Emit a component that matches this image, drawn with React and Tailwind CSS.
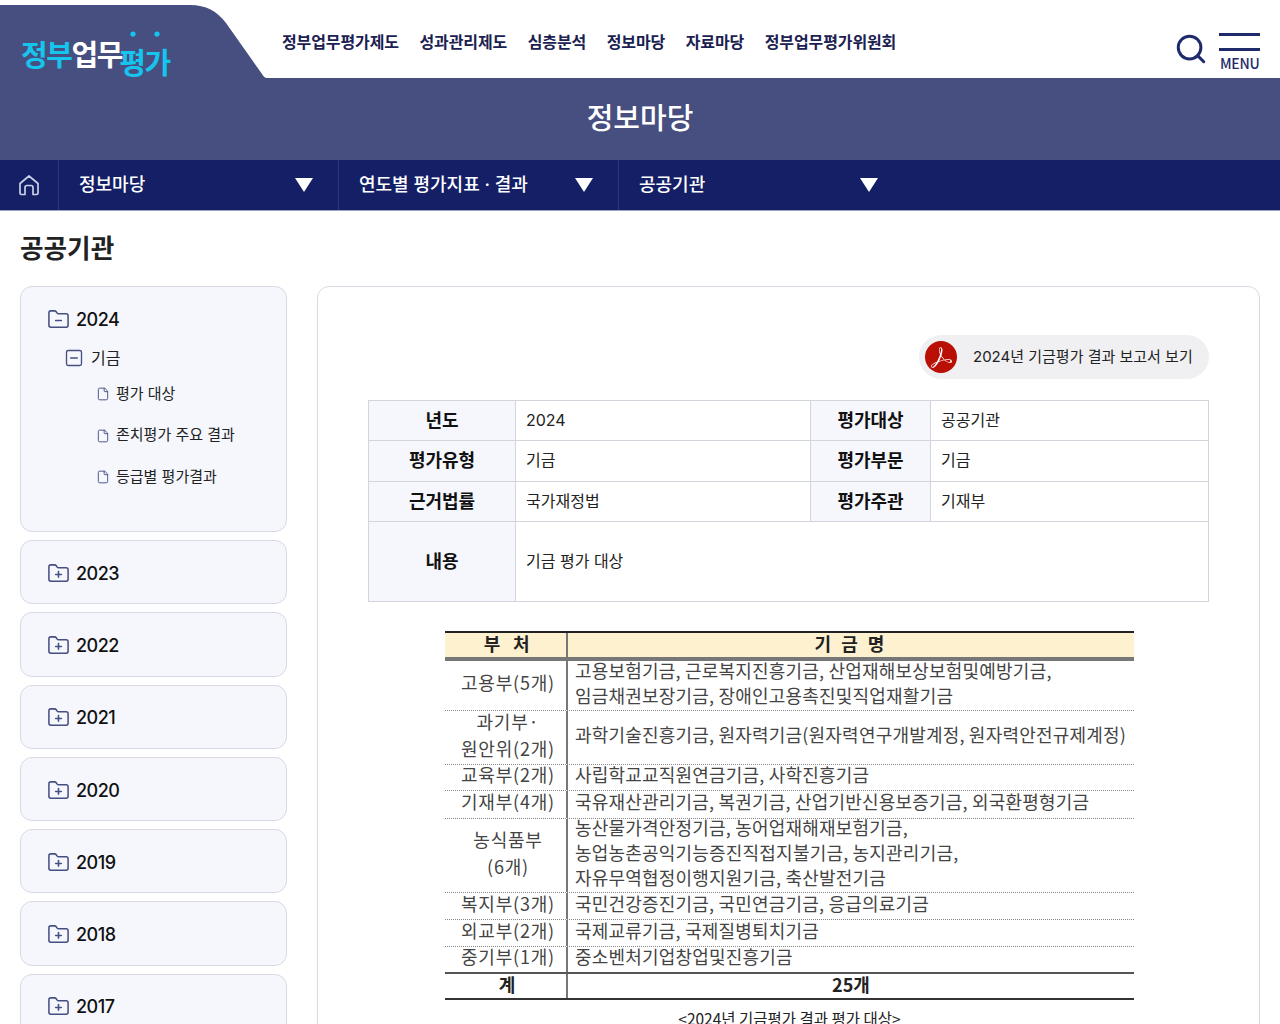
import React from 'react';
import { FolderMinus, FolderPlus, File, SquareMinus, Search } from 'lucide-react';
import { SiAdobeacrobatreader } from 'react-icons/si';

const fontUi = 'font-["Inter","Noto_Sans_CJK_KR",sans-serif]';

const topMenu = ['정부업무평가제도', '성과관리제도', '심층분석', '정보마당', '자료마당', '정부업무평가위원회'];
const crumbs = ['정보마당', '연도별 평가지표 · 결과', '공공기관'];
const years = ['2023', '2022', '2021', '2020', '2019', '2018', '2017'];
const subItems = ['평가 대상', '존치평가 주요 결과', '등급별 평가결과'];

const funds = [
  { dept: ['고용부(5개)'], h: 'h-[50px]', lines: ['고용보험기금, 근로복지진흥기금, 산업재해보상보험및예방기금,', '임금채권보장기금, 장애인고용촉진및직업재활기금'] },
  { dept: ['과기부·', '원안위(2개)'], h: 'h-[54px]', lines: ['과학기술진흥기금, 원자력기금(원자력연구개발계정, 원자력안전규제계정)'] },
  { dept: ['교육부(2개)'], h: 'h-[26px]', lines: ['사립학교교직원연금기금, 사학진흥기금'] },
  { dept: ['기재부(4개)'], h: 'h-[28px]', lines: ['국유재산관리기금, 복권기금, 산업기반신용보증기금, 외국환평형기금'] },
  { dept: ['농식품부', '(6개)'], h: 'h-[74px]', lines: ['농산물가격안정기금, 농어업재해재보험기금,', '농업농촌공익기능증진직접지불기금, 농지관리기금,', '자유무역협정이행지원기금, 축산발전기금'] },
  { dept: ['복지부(3개)'], h: 'h-[27px]', lines: ['국민건강증진기금, 국민연금기금, 응급의료기금'] },
  { dept: ['외교부(2개)'], h: 'h-[27px]', lines: ['국제교류기금, 국제질병퇴치기금'] },
  { dept: ['중기부(1개)'], h: 'h-[25px]', lines: ['중소벤처기업창업및진흥기금'] },
];

const Logo = () => (
  <div className="relative w-[267px] h-[78px] shrink-0">
    <svg className="absolute inset-0" width="267" height="78" viewBox="0 0 267 78">
      <path d="M0 5 H190 C206 5 217 11 226 23 L262 74 C263.500 76.500 265 78 267 78 H0 Z" fill="#474f80" />
      <circle cx="133" cy="34" r="2.6" fill="#16c5ee" />
      <circle cx="157" cy="34" r="2.6" fill="#16c5ee" />
    </svg>
    <div className="absolute left-[21px] top-[33px] flex items-start text-[29px] leading-[40px] font-bold tracking-[-1.4px] font-['Noto_Sans_CJK_KR',sans-serif]">
      <span className="text-[#16c5ee]">정부</span>
      <span className="text-white">업무</span>
      <span className="text-[#16c5ee] mt-[8px] -ml-[3px]">평가</span>
    </div>
  </div>
);

const Header = () => (
  <header className="flex h-[78px] bg-white">
    <Logo />
    <nav className="flex gap-[20.500px] ml-[15px] pt-[31px] text-[16px] leading-[22px] font-bold text-[#1b2150] tracking-[-0.1px]">
      {topMenu.map((m) => (
        <span key={m}>{m}</span>
      ))}
    </nav>
    <div className="ml-auto flex items-start pt-[33px] pr-[20px] gap-[11px]">
      <Search size={34} strokeWidth={2.1} className="text-[#1f2a6b] -mt-[1px]" />
      <div className="w-[41px]">
        <div className="h-[3px] bg-[#1f2a6b]" />
        <div className="h-[3px] bg-[#1f2a6b] mt-[12px]" />
        <div className="text-[14px] leading-[16px] mt-[4px] font-medium text-[#1f2a6b] font-['Noto_Sans_CJK_KR',sans-serif] pl-[1px] tracking-[-0.3px]">MENU</div>
      </div>
    </div>
  </header>
);

const Breadcrumb = () => (
  <div className="flex h-[51px] bg-[#141f66] border-b border-[#9aa3c4]">
    <div className="w-[59px] flex items-center justify-center border-r border-[#2b3679]">
      <svg width="22" height="22" viewBox="0 0 22 22" fill="none" stroke="#c9d0e8" strokeWidth="1.7" strokeLinejoin="round">
        <path d="M2 9.5 L11 2 L20 9.5 V19 a1.5 1.5 0 0 1 -1.5 1.5 H15 V13.5 a2 2 0 0 0 -2 -2 H9 a2 2 0 0 0 -2 2 V20.500 H3.500 A1.500 1.500 0 0 1 2 19 Z" />
      </svg>
    </div>
    {crumbs.map((c) => (
      <div key={c} className="w-[280px] last:w-[284px] flex items-center justify-between pl-[20px] pr-[25px] pb-[2px] border-r border-[#2b3679] text-[18px] font-medium text-white last:border-r-0">
        <span>{c}</span>
        <svg width="18" height="14" viewBox="0 0 18 14" className="mt-[1px]">
          <polygon points="0,0 18,0 9,14" fill="#ffffff" />
        </svg>
      </div>
    ))}
  </div>
);

const Sidebar = () => (
  <aside className="w-[267px] shrink-0 flex flex-col gap-[8px]">
    <div className="h-[246px] rounded-xl border border-[#d8dae3] bg-[#f5f7fd] pl-[26px] pt-[19px]">
      <div className="flex items-center gap-[6px] h-[26px] text-[18px] tracking-[-0.5px] font-medium text-[#111]">
        <FolderMinus size={23} strokeWidth={1.6} className="text-[#474f80]" />
        <span>2024</span>
      </div>
      <div className="flex items-center gap-[7px] h-[24px] mt-[14px] ml-[17px] text-[16px] text-[#222]">
        <SquareMinus size={20} strokeWidth={1.6} className="text-[#474f80]" />
        <span>기금</span>
      </div>
      <div className="flex flex-col gap-[19.500px] mt-[13px] ml-[49px]">
        {subItems.map((s) => (
          <div key={s} className="flex items-center gap-[6px] h-[22px] text-[15px] text-[#222]">
            <File size={14} strokeWidth={1.6} className="text-[#474f80]" />
            <span>{s}</span>
          </div>
        ))}
      </div>
    </div>
    {years.map((y) => (
      <div key={y} className="h-[64.300px] shrink-0 rounded-xl border border-[#d8dae3] bg-[#f5f7fd] pl-[26px] pt-[2px] flex items-center gap-[6px] text-[18px] tracking-[-0.5px] font-medium text-[#111]">
        <FolderPlus size={23} strokeWidth={1.6} className="text-[#474f80]" />
        <span>{y}</span>
      </div>
    ))}
  </aside>
);

const InfoTable = () => {
  const th = 'bg-[#f5f7fd] border border-[#d3d5dd] text-[18px] font-bold text-[#111] text-center pb-[1px]';
  const td = 'border border-[#d3d5dd] px-[10px] pb-[2px] text-[16px] text-[#222]';
  return (
    <table className="w-[841px] table-fixed border-collapse">
      <colgroup>
        <col className="w-[147px]" />
        <col className="w-[295px]" />
        <col className="w-[120px]" />
        <col />
      </colgroup>
      <tbody>
        <tr className="h-[40px]">
          <th className={th}>년도</th>
          <td className={td}>2024</td>
          <th className={th}>평가대상</th>
          <td className={td}>공공기관</td>
        </tr>
        <tr className="h-[41px]">
          <th className={th}>평가유형</th>
          <td className={td}>기금</td>
          <th className={th}>평가부문</th>
          <td className={td}>기금</td>
        </tr>
        <tr className="h-[40px]">
          <th className={th}>근거법률</th>
          <td className={td}>국가재정법</td>
          <th className={th}>평가주관</th>
          <td className={td}>기재부</td>
        </tr>
        <tr className="h-[80px]">
          <th className={th}>내용</th>
          <td className={td} colSpan={3}>기금 평가 대상</td>
        </tr>
      </tbody>
    </table>
  );
};

const FundTable = () => (
  <div className="w-[689px] ml-[77px] mt-[29px] font-['Noto_Sans_CJK_KR',sans-serif] text-[18px] leading-[25px] text-[#444]">
    <div className="flex h-[30px] border-t-[2px] border-b-[4px] border-t-[#222] border-b-[#777] bg-[#fdf1d0] font-bold text-[#222] leading-[20px]">
      <div className="w-[123px] text-center border-r-[2px] border-[#777] tracking-[1.5px] pl-[4px]">부&nbsp;&nbsp;처</div>
      <div className="flex-1 text-center tracking-[3px]">기&nbsp;금&nbsp;명</div>
    </div>
    {funds.map((f, i) => (
      <div key={f.dept[0]} className={`flex ${f.h} ${i < funds.length - 1 ? 'border-b border-dotted border-[#888]' : ''}`}>
        <div className="w-[123px] flex flex-col justify-center items-center border-r-[2px] border-[#777] pb-[6px] pl-[5px] tracking-[0.8px]">
          {f.dept.map((d) => (
            <div key={d} className={f.dept.length > 1 ? 'leading-[27px]' : ''}>{d}</div>
          ))}
        </div>
        <div className="flex-1 flex flex-col justify-center pl-[7px] pb-[6px] whitespace-nowrap tracking-[0.2px]">
          {f.lines.map((l) => (
            <div key={l}>{l}</div>
          ))}
        </div>
      </div>
    ))}
    <div className="flex h-[28px] border-t-[2px] border-b-[2px] border-t-[#555] border-b-[#333] font-bold text-[#222] leading-[20px]">
      <div className="w-[123px] text-center border-r-[2px] border-[#777] pl-[3px]">계</div>
      <div className="flex-1 text-center">25개</div>
    </div>
    <div className="mt-[8px] text-center text-[15.500px] leading-[20px] text-[#222]">&lt;2024년 기금평가 결과 평가 대상&gt;</div>
  </div>
);

const App = () => (
  <div className={`h-[1024px] overflow-hidden bg-white ${fontUi}`}>
    <Header />
    <div className="h-[82px] bg-[#474f80] flex items-center justify-center text-[29px] font-medium text-white">정보마당</div>
    <Breadcrumb />
    <main className="px-[20px]">
      <h1 className="pt-[20px] h-[75px] text-[25.600px] leading-[36px] font-bold text-[#222]">공공기관</h1>
      <div className="flex gap-[30px] items-start">
        <Sidebar />
        <section className="flex-1 h-[900px] rounded-xl border border-[#d8dae3] px-[50px] pt-[48px]">
          <div className="flex justify-end">
            <div className="flex items-center h-[44px] w-[290px] rounded-full bg-[#f0f0f2] pl-[6px] gap-[16px]">
              <div className="w-[32px] h-[32px] rounded-full bg-[#b90f05] flex items-center justify-center">
                <SiAdobeacrobatreader size={21} className="text-white" />
              </div>
              <span className="text-[15px] text-[#222]">2024년 기금평가 결과 보고서 보기</span>
            </div>
          </div>
          <div className="mt-[21px]">
            <InfoTable />
          </div>
          <FundTable />
        </section>
      </div>
    </main>
  </div>
);

export default App;
